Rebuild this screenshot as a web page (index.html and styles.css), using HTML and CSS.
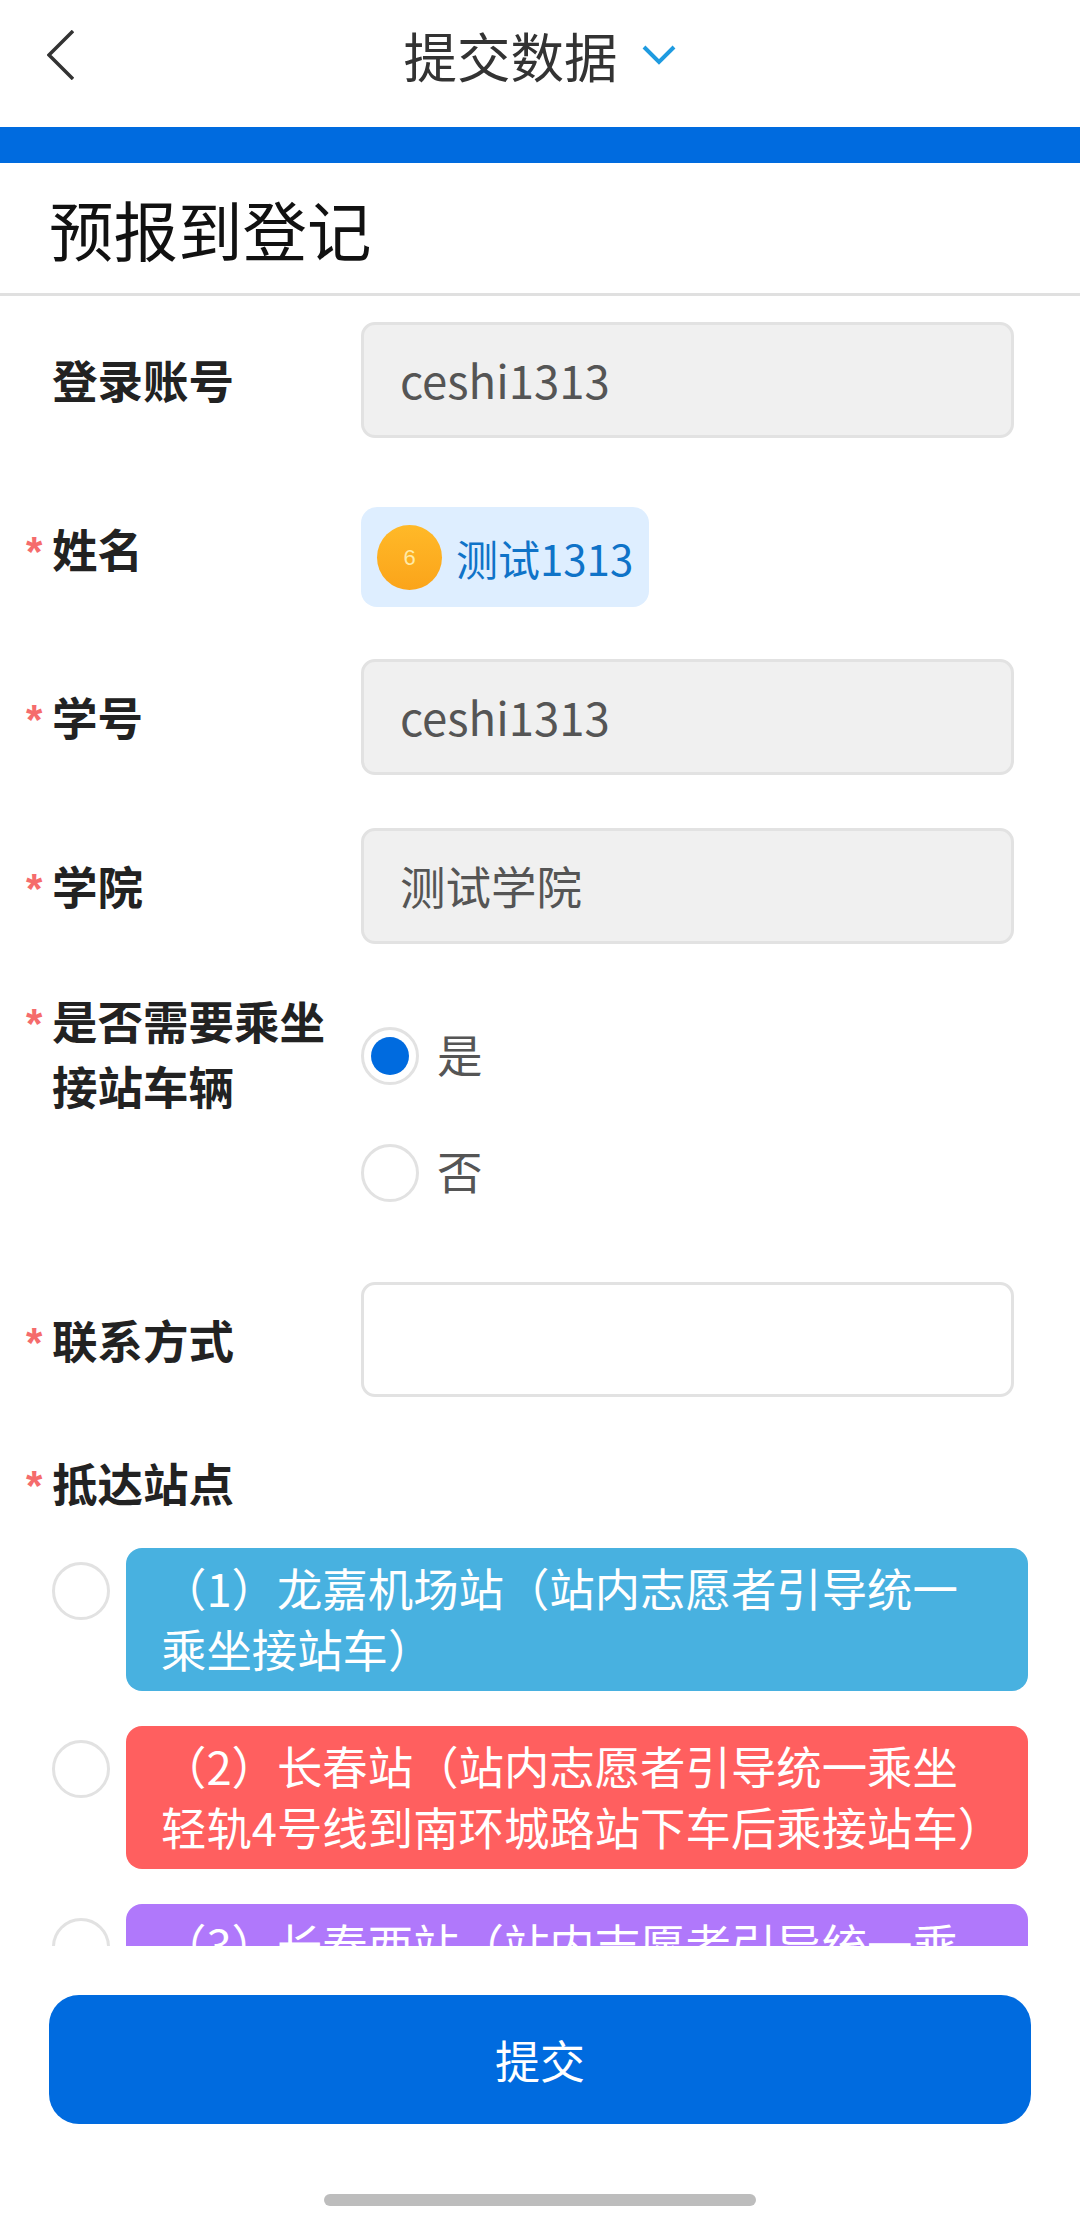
FILE: index.html
```html
<!DOCTYPE html>
<html lang="zh-CN">
<head>
<meta charset="UTF-8">
<meta name="viewport" content="width=device-width, initial-scale=1.0">
<link rel="stylesheet" href="styles.css">
<title>提交数据</title>
</head>
<body>
<div class="page">
  <div class="topbar">
    <div class="back">
      <svg width="27" height="50" viewBox="0 0 27 50"><path d="M26 1 L2 25 L26 49" fill="none" stroke="#333" stroke-width="3.5"/></svg>
    </div>
    <div class="topbar-title">
      <span>提交数据</span>
      <svg width="34" height="20" viewBox="0 0 34 20"><path d="M2 2 L17 17 L32 2" fill="none" stroke="#1f9be0" stroke-width="4"/></svg>
    </div>
  </div>
  <div class="accent-bar"></div>
  <h1 class="page-title">预报到登记</h1>

  <div class="form">
    <div class="row row-first">
      <div class="label"><span class="star"></span><span>登录账号</span></div>
      <div class="field field-disabled">ceshi1313</div>
    </div>
    <div class="row row-chip">
      <div class="label"><span class="star">*</span><span>姓名</span></div>
      <div class="chip-wrap">
        <div class="chip"><span class="avatar">6</span><span>测试1313</span></div>
      </div>
    </div>
    <div class="row">
      <div class="label"><span class="star">*</span><span>学号</span></div>
      <div class="field field-disabled">ceshi1313</div>
    </div>
    <div class="row row-before-radio">
      <div class="label"><span class="star">*</span><span>学院</span></div>
      <div class="field field-disabled">测试学院</div>
    </div>
    <div class="row row-radio">
      <div class="label"><span class="star">*</span><span>是否需要乘坐<br>接站车辆</span></div>
      <div class="radio-group">
        <label class="radio-item"><input type="radio" name="bus" checked><span>是</span></label>
        <label class="radio-item"><input type="radio" name="bus"><span>否</span></label>
      </div>
    </div>
    <div class="row">
      <div class="label"><span class="star">*</span><span>联系方式</span></div>
      <div class="field field-empty"></div>
    </div>
    <div class="label label-stations"><span class="star">*</span><span>抵达站点</span></div>
    <div class="options">
      <label class="option"><input type="radio" name="station"><div class="option-text blue">（1）龙嘉机场站（站内志愿者引导统一乘坐接站车）</div></label>
      <label class="option"><input type="radio" name="station"><div class="option-text red">（2）长春站（站内志愿者引导统一乘坐轻轨4号线到南环城路站下车后乘接站车）</div></label>
      <label class="option"><input type="radio" name="station"><div class="option-text purple">（3）长春西站（站内志愿者引导统一乘坐接站车）</div></label>
    </div>
  </div>

  <div class="footer">
    <button class="submit">提交</button>
    <div class="home-bar"></div>
  </div>
</div>
</body>
</html>
```

FILE: styles.css
```css
* {
  box-sizing: border-box;
}
body {
  margin: 0;
  padding: 0;
  background-color: #ffffff;
  font-family: "Noto Sans CJK SC", "Noto Sans", sans-serif;
  font-size: 45.5px;
  color: #222222;
}
.page {
  display: flex;
  flex-direction: column;
  height: 2227px;
  overflow: hidden;
}
.topbar {
  flex: none;
  display: grid;
  grid-template-columns: 1fr auto 1fr;
  align-items: center;
  height: 127px;
  padding-left: 47px;
  padding-bottom: 18px;
}
.back {
  display: flex;
  grid-column: 1;
}
.topbar-title {
  grid-column: 2;
  display: flex;
  align-items: center;
  gap: 24px;
  margin-right: 48px;
  font-size: 53.5px;
  color: #333333;
}
.accent-bar {
  flex: none;
  height: 36px;
  background-color: #006bdf;
}
.page-title {
  flex: none;
  height: 133px;
  margin: 0;
  padding-left: 49px;
  border-bottom: 3px solid #e0e0e0;
  font-size: 64.5px;
  font-weight: 400;
  line-height: 130px;
  color: #111111;
}
.form {
  flex: 1;
  min-height: 0;
  overflow: hidden;
  padding-top: 26px;
}
.row {
  display: grid;
  grid-template-columns: 361px 653px;
  margin-bottom: 53px;
}
.row-first {
  margin-bottom: 69px;
}
.row-chip {
  margin-bottom: 52px;
}
.row-before-radio {
  margin-bottom: 44px;
}
.row-radio {
  margin-bottom: 80px;
}
.label {
  display: flex;
  padding-top: 25px;
  padding-left: 26px;
  font-weight: 700;
  line-height: 65px;
  color: #222222;
}
.row-chip .label {
  padding-top: 9px;
}
.row-radio .label {
  padding-top: 0;
}
.label-stations {
  padding-top: 0;
  margin-bottom: 33px;
}
.star {
  flex: none;
  width: 26px;
  padding-top: 6px;
  font-family: "Liberation Sans", sans-serif;
  font-size: 42px;
  font-weight: 700;
  line-height: 59px;
  color: #f56c6c;
}
.field {
  height: 116px;
  padding-left: 36px;
  border: 3px solid #e2e2e2;
  border-radius: 14px;
  line-height: 108px;
  color: #555555;
}
.field-disabled {
  background-color: #f0f0f0;
}
.field-empty {
  height: 115px;
}
.chip-wrap {
  display: flex;
}
.chip {
  display: flex;
  align-items: center;
  gap: 14px;
  height: 100px;
  padding: 0 16px 0 16px;
  border-radius: 16px;
  background-color: #deeeff;
  font-size: 42px;
  color: #0f73c8;
}
.avatar {
  width: 65px;
  height: 65px;
  border-radius: 50%;
  background: linear-gradient(#ffb928, #fba41a);
  font-family: "Liberation Sans", sans-serif;
  font-size: 22px;
  line-height: 65px;
  text-align: center;
  color: #ffeaa6;
}
.radio-group {
  display: flex;
  flex-direction: column;
  gap: 59px;
  padding-top: 39px;
}
.radio-item {
  display: flex;
  align-items: center;
  gap: 18px;
  height: 58px;
  color: #555555;
}
.radio-item span {
  margin-bottom: 6px;
}
input[type="radio"] {
  appearance: none;
  flex: none;
  width: 58px;
  height: 58px;
  margin: 0;
  padding: 7px;
  border: 3px solid #e2e2e2;
  border-radius: 50%;
  background-color: #ffffff;
  background-clip: content-box;
}
input[type="radio"]:checked {
  background-color: #006bdf;
}
.options {
  display: flex;
  flex-direction: column;
  gap: 35px;
  padding-left: 52px;
}
.option {
  display: flex;
  align-items: flex-start;
  gap: 16px;
  width: 976px;
}
.option input[type="radio"] {
  margin-top: 14px;
}
.option-text {
  flex: 1;
  height: 143px;
  overflow: hidden;
  padding: 9px 35px 0;
  border-radius: 16px;
  font-size: 45.4px;
  line-height: 61px;
  color: #ffffff;
}
.blue {
  background-color: #48b1e0;
}
.red {
  background-color: #ff5f5f;
}
.purple {
  background-color: #b078fb;
}
.footer {
  flex: none;
  height: 281px;
  padding-top: 49px;
  background-color: #ffffff;
}
.submit {
  display: block;
  width: 982px;
  height: 129px;
  margin: 0 auto;
  border: none;
  border-radius: 30px;
  background-color: #006bdf;
  font-family: inherit;
  font-size: 45px;
  color: #ffffff;
}
.home-bar {
  width: 432px;
  height: 12px;
  margin: 70px auto 0;
  border-radius: 6px;
  background-color: #bdbdbd;
}
```
